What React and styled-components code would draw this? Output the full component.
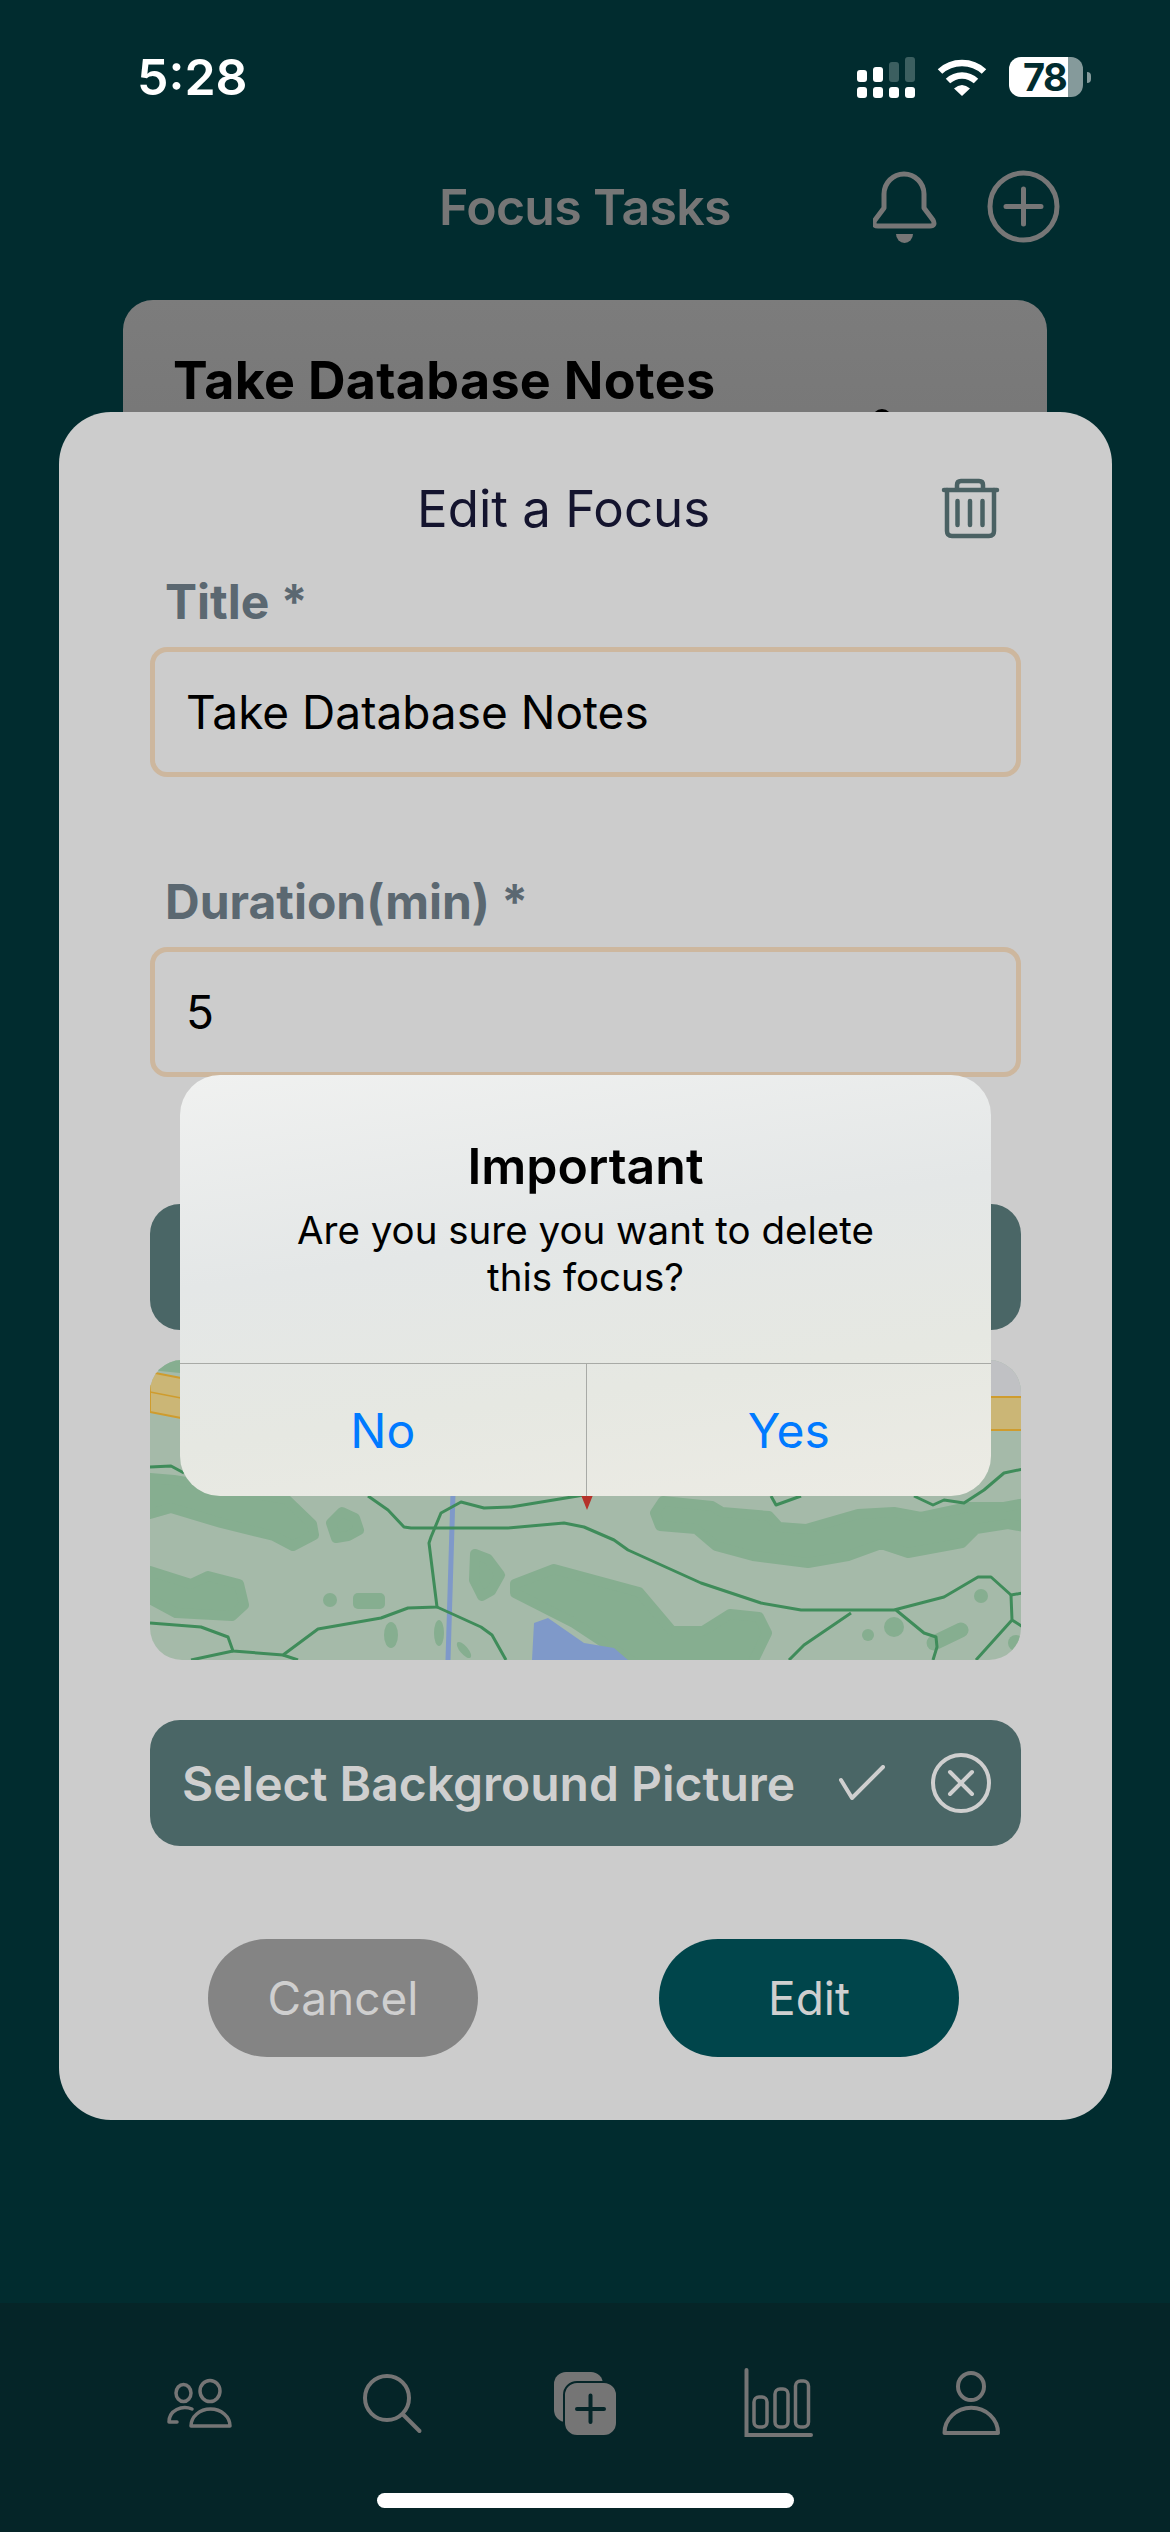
import React from "react";
import styled, { createGlobalStyle } from "styled-components";

const GlobalStyle = createGlobalStyle`
  * { box-sizing: border-box; }
  body {
    margin: 0;
    background: #012c2f;
    font-family: "Inter", "Liberation Sans", sans-serif;
  }
`;

const Page = styled.div`
  position: relative;
  display: flex;
  flex-direction: column;
  width: 1170px;
  height: 2532px;
  overflow: hidden;
  background: #012c2f;
`;

const StatusBar = styled.div`
  display: flex;
  align-items: center;
  justify-content: space-between;
  height: 42px;
  margin-top: 56px;
  padding: 0 79px 0 137px;
`;

const Time = styled.div`
  color: #fff;
  font-size: 50px;
  font-weight: 600;
  line-height: 42px;
`;

const StatusIcons = styled.div`
  display: flex;
  align-items: center;
  gap: 22px;
`;

const Battery = styled.div`
  position: relative;
  display: flex;
  align-items: center;
  justify-content: flex-start;
  width: 74px;
  height: 40px;
  margin-right: 8px;
  padding-left: 14px;
  border-radius: 12px;
  background: linear-gradient(90deg, #fff 80%, #859a9b 80%);
  color: #012c2f;
  font-size: 38px;
  font-weight: 700;
  letter-spacing: -1.5px;

  &::after {
    content: "";
    position: absolute;
    right: -8px;
    top: 15px;
    width: 4px;
    height: 11px;
    border-radius: 0 4px 4px 0;
    background: #859a9b;
  }
`;

const Header = styled.header`
  display: grid;
  grid-template-columns: 1fr auto 1fr;
  align-items: center;
  height: 73px;
  margin-top: 72px;
`;

const HeaderTitle = styled.h1`
  margin: 0;
  color: #767676;
  font-size: 50px;
  font-weight: 600;
  letter-spacing: -0.7px;
`;

const HeaderActions = styled.div`
  grid-column: 3;
  display: flex;
  align-items: center;
  justify-content: flex-end;
  gap: 50px;
  padding-right: 110px;
`;

const TaskCard = styled.div`
  position: relative;
  height: 220px;
  margin: 57px 123px 0;
  padding: 55px 50px;
  border-radius: 30px;
  background: linear-gradient(180deg, #7c7c7c, #747474);
`;

const TaskTitle = styled.div`
  color: #000;
  font-size: 52px;
  font-weight: 700;
  letter-spacing: 0.3px;
  line-height: 52px;
`;

const TaskPip = styled.span`
  position: absolute;
  left: 749px;
  top: 109px;
  width: 20px;
  height: 20px;
  border-radius: 50%;
  background: #000;
`;

const TabBar = styled.nav`
  margin-top: auto;
  height: 229px;
  padding-top: 65px;
  background: #052528;
`;

const TabRow = styled.div`
  display: grid;
  grid-template-columns: repeat(5, 193px);
  justify-content: center;
  justify-items: center;
  align-items: center;
`;

const HomeIndicator = styled.div`
  width: 417px;
  height: 15px;
  margin: 55px auto 0;
  border-radius: 8px;
  background: #fff;
`;

const Sheet = styled.section`
  position: absolute;
  left: 59px;
  top: 412px;
  width: 1053px;
  height: 1708px;
  padding: 66px 91px 0;
  border-radius: 52px;
  background: #cccccc;
`;

const SheetHeader = styled.div`
  display: flex;
  align-items: center;
  justify-content: space-between;
  height: 62px;
  padding: 0 19px 0 267px;
`;

const SheetTitle = styled.h2`
  margin: 0 0 2px;
  color: #14142e;
  font-size: 51px;
  font-weight: 400;
`;

const Field = styled.div`
  height: 300px;
  padding-top: 34px;
`;

const Label = styled.div`
  height: 73px;
  padding-left: 15px;
  color: #5b6871;
  font-size: 48px;
  font-weight: 700;
  line-height: 56px;
`;

const Input = styled.div`
  display: flex;
  align-items: center;
  height: 130px;
  padding: 0 31px;
  border: 5px solid #cdb79e;
  border-radius: 17px;
  color: #000;
  font-size: 46px;
`;

const PickerButton = styled.div`
  display: flex;
  align-items: center;
  height: 126px;
  margin-top: ${(p) => p.$top}px;
  padding: 0 32px;
  border-radius: 30px;
  background: #4a6666;
  color: #cfcfcf;
  font-size: 48px;
  font-weight: 600;

  svg {
    flex: none;
  }
`;

const PickerLabel = styled.span`
  flex: none;
  margin-right: 44px;
  white-space: nowrap;
`;

const ClearIcon = styled.svg`
  margin-left: 46px;
`;

const MapFrame = styled.div`
  height: 300px;
  margin-top: 30px;
  border-radius: 32px;
  overflow: hidden;
  background: #a5baa9;

  svg {
    display: block;
  }
`;

const SheetActions = styled.div`
  display: flex;
  justify-content: space-between;
  margin-top: 93px;
  padding: 0 62px 0 58px;
`;

const ActionButton = styled.div`
  display: flex;
  align-items: center;
  justify-content: center;
  width: ${(p) => p.$width}px;
  height: 118px;
  border-radius: 59px;
  background: ${(p) => p.$bg};
  color: #cfcfcf;
  font-size: 46px;
`;

const Alert = styled.div`
  position: absolute;
  left: 180px;
  top: 1075px;
  width: 811px;
  height: 421px;
  border-radius: 40px;
  overflow: hidden;
  background: linear-gradient(172deg, #f0f1f0 0%, #e4e7e7 40%, #e6e8e2 70%, #ecebe4 100%);
`;

const AlertBody = styled.div`
  display: flex;
  flex-direction: column;
  align-items: center;
  height: 288px;
  padding-top: 60px;
  text-align: center;
`;

const AlertTitle = styled.div`
  color: #000;
  font-size: 50px;
  font-weight: 600;
  line-height: 62px;
`;

const AlertMessage = styled.div`
  margin-top: 10px;
  color: #000;
  font-size: 38.5px;
  line-height: 47px;
`;

const AlertActions = styled.div`
  display: grid;
  grid-template-columns: 1fr 1fr;
  height: 133px;
  border-top: 1px solid #a8aaa6;
`;

const AlertButton = styled.div`
  display: flex;
  align-items: center;
  justify-content: center;
  color: #007aff;
  font-size: 48px;

  & + & {
    border-left: 1px solid #a8aaa6;
  }
`;

const TAB = "#757575";
const TEAL = "#4a6163";

const CellIcon = () => (
  <svg width="58" height="41" viewBox="0 0 58 41">
    <rect x="0" y="30" width="10" height="11" rx="3" fill="#fff" />
    <rect x="16" y="30" width="10" height="11" rx="3" fill="#fff" />
    <rect x="32" y="30" width="10" height="11" rx="3" fill="#fff" />
    <rect x="48" y="30" width="10" height="11" rx="3" fill="#fff" />
    <rect x="0" y="13" width="10" height="12" rx="3" fill="#fff" />
    <rect x="16" y="10" width="10" height="15" rx="3" fill="#fff" />
    <rect x="32" y="5" width="10" height="20" rx="3" fill="#3c5f60" />
    <rect x="48" y="0" width="10" height="25" rx="3" fill="#3c5f60" />
  </svg>
);

const WifiIcon = () => (
  <svg width="50" height="37" viewBox="0 0 50 37" fill="none" stroke="#fff" strokeWidth="6.5">
    <path d="M3 12.5C15 1 35 1 47 12.5" />
    <path d="M11 22C19 14.5 31 14.5 39 22" />
    <path d="M17 29.5Q25 22.5 33 29.5L25 37Z" fill="#fff" stroke="none" />
  </svg>
);

const BellIcon = () => (
  <svg width="64" height="72" viewBox="0 0 64 72" fill="none">
    <path
      d="M11 37V23A20 20 0 0 1 51 23V37L60 49Q63 55 57 55H5Q-1 55 2 49Z"
      stroke="#767676"
      strokeWidth="5"
      strokeLinejoin="round"
    />
    <path d="M23 63H40A8.5 9 0 0 1 23 63Z" fill="#767676" />
  </svg>
);

const PlusCircleIcon = () => (
  <svg width="73" height="73" viewBox="0 0 73 73" fill="none" stroke="#767676" strokeWidth="5" strokeLinecap="round">
    <circle cx="36.5" cy="36.5" r="33.5" />
    <path d="M36.5 19V54M19 36.5H54" />
  </svg>
);

const TrashIcon = () => (
  <svg width="63" height="62" viewBox="20 18 63 62" fill="none" stroke={TEAL} strokeWidth="4.5" strokeLinecap="round" strokeLinejoin="round">
    <path d="M25 30H78" />
    <path d="M38 29V25Q38 21 42 21H60Q64 21 64 25V29" />
    <path d="M28 30V71Q28 76 33 76H70Q75 76 75 71V30" />
    <path d="M38.5 41V65M51 41V65M63.5 41V65" />
  </svg>
);

const CheckIcon = () => (
  <svg width="46" height="36" viewBox="0 0 46 36" fill="none" stroke="#cfcfcf" strokeWidth="4" strokeLinecap="round" strokeLinejoin="round">
    <path d="M2 15L13 33L44 2" />
  </svg>
);

const CloseCircleIcon = () => (
  <ClearIcon width="60" height="60" viewBox="0 0 60 60" fill="none" stroke="#cfcfcf" strokeWidth="4" strokeLinecap="round">
    <circle cx="30" cy="30" r="28" />
    <path d="M19 19L41 41M41 19L19 41" />
  </ClearIcon>
);

const PeopleIcon = () => (
  <svg width="70" height="70" viewBox="0 0 70 70" fill="none" stroke={TAB} strokeWidth="3.5" strokeLinejoin="round" strokeLinecap="round">
    <ellipse cx="46" cy="23" rx="10" ry="10.5" />
    <ellipse cx="19.5" cy="25" rx="7.5" ry="8.5" />
    <path d="M27 58A19.5 17 0 0 1 66 58Z" />
    <path d="M28 41C18 37 5 42 5 54H13" />
  </svg>
);

const SearchIcon = () => (
  <svg width="70" height="70" viewBox="0 0 70 70" fill="none" stroke={TAB} strokeWidth="4" strokeLinecap="round">
    <circle cx="30" cy="30" r="22" />
    <path d="M46.5 47L62.5 63" />
  </svg>
);

const AddCardIcon = () => (
  <svg width="70" height="70" viewBox="0 0 70 70">
    <rect x="4" y="4" width="49" height="50" rx="12" fill={TAB} />
    <rect x="14" y="14" width="53" height="54" rx="13" fill={TAB} stroke="#052528" strokeWidth="2" />
    <path d="M40.5 27.5V54M27 41H54" stroke="#052528" strokeWidth="4" strokeLinecap="round" />
  </svg>
);

const ChartIcon = () => (
  <svg width="70" height="70" viewBox="0 0 70 70" fill="none" stroke={TAB} strokeWidth="3.5" strokeLinecap="round">
    <path d="M3.5 2V67H68" strokeWidth="4" />
    <rect x="11" y="29" width="13" height="30" rx="5" />
    <rect x="32" y="21" width="13" height="38" rx="5" />
    <rect x="52.5" y="13" width="13" height="46" rx="5" />
  </svg>
);

const PersonIcon = () => (
  <svg width="70" height="70" viewBox="0 0 70 70" fill="none" stroke={TAB} strokeWidth="4" strokeLinejoin="round">
    <ellipse cx="35" cy="18.5" rx="13" ry="13.5" />
    <path d="M8.5 65A26.5 25 0 0 1 62 65Z" />
  </svg>
);

const FOREST = "#86ae90";
const ROAD = "#3f8c5a";

const MapPicture = () => (
  <svg width="873" height="300" viewBox="0 0 873 300" fill="none">
    <path d="M0 0H60V16L0 10Z" fill={FOREST} />
    <path d="M560 0H873V37H560Z" fill="#c0c1c4" />
    <path d="M0 12L31 18L300 60L560 37H873V70H560L300 90L31 58L0 52Z" fill="#cbb676" stroke="#cf9c2e" strokeWidth="2" />
    <path d="M0 32L31 38" stroke="#cf9c2e" strokeWidth="1.5" />

    <g fill={FOREST} stroke={FOREST} strokeWidth="10" strokeLinejoin="round">
      <path d="M0 118L24 120L136 139L162 164L164 175L143 186L124 176L71 163L21 148L0 154Z" />
      <path d="M181 163L192 152L205 158L209 170L198 176L186 178Z" />
      <path d="M0 211L41 224L58 216L89 224L94 245L82 256L26 253L0 239Z" />
      <path d="M325 194L338 199L350 215L341 231L332 236L324 220Z" />
      <path d="M365 224L404 209L489 232L522 271L553 271L580 254L609 257L617 273L602 304H486L424 263L365 233Z" />
      <path d="M505 153L513 141L562 146L572 152L619 156L629 167L656 169L708 154L744 152L771 157L818 147L854 147L880 142V168L858 164L826 169L812 183L758 193L731 184L698 196L658 203L603 196L566 186L546 169L510 166Z" />
      <path d="M208 238H230V244H208Z" />
    </g>
    <g fill={FOREST}>
      <circle cx="180" cy="240" r="7" />
      <ellipse cx="241" cy="275" rx="7" ry="13" />
      <ellipse cx="289" cy="273" rx="5" ry="13" />
      <ellipse cx="314" cy="290" rx="4" ry="10" transform="rotate(-40 314 290)" />
      <circle cx="831" cy="236" r="7" />
      <circle cx="744" cy="267" r="10" />
      <circle cx="718" cy="275" r="6" />
      <circle cx="866" cy="283" r="8" />
    </g>
    <path d="M784 283L811 270" stroke={FOREST} strokeWidth="15" strokeLinecap="round" />
    <path d="M384 263L398 258L434 283L464 288L478 300H382Z" fill="#7f99c9" />
    <path d="M304 100L298 300" stroke="#7f99c9" strokeWidth="5" />

    <g stroke={ROAD} strokeWidth="3" strokeLinejoin="round">
      <path d="M0 107L21 106L34 113" />
      <path d="M218 136L238 150L254 167L261 168H358L414 163L434 167L464 180L478 190L551 223L611 243L651 250H744L794 237L828 217H841L861 235L873 233" />
      <path d="M434 135L361 147L334 148L311 142L291 153L281 177L279 183L287 247L258 248L231 258L168 269L133 295L83 291L78 277L51 267L0 263" />
      <path d="M83 291L41 300M133 295L148 300M287 247L331 267L342 275L356 300" />
      <path d="M621 136L626 145L651 136" />
      <path d="M764 136L783 145L794 140L814 143L834 130L854 113L873 109" />
      <path d="M701 253L654 285L639 300" />
      <path d="M746 250L774 273L786 277L787 287L783 300" />
      <path d="M861 235L862 260L826 300M862 260L873 267" />
    </g>
    <path d="M429 130H445L437 150Z" fill="#b5322a" />
  </svg>
);

export default function App() {
  return (
    <Page>
      <GlobalStyle />
      <StatusBar>
        <Time>5:28</Time>
        <StatusIcons>
          <CellIcon />
          <WifiIcon />
          <Battery>78</Battery>
        </StatusIcons>
      </StatusBar>

      <Header>
        <span />
        <HeaderTitle>Focus Tasks</HeaderTitle>
        <HeaderActions>
          <BellIcon />
          <PlusCircleIcon />
        </HeaderActions>
      </Header>

      <TaskCard>
        <TaskTitle>Take Database Notes</TaskTitle>
        <TaskPip />
      </TaskCard>

      <TabBar>
        <TabRow>
          <PeopleIcon />
          <SearchIcon />
          <AddCardIcon />
          <ChartIcon />
          <PersonIcon />
        </TabRow>
        <HomeIndicator />
      </TabBar>

      <Sheet>
        <SheetHeader>
          <SheetTitle>Edit a Focus</SheetTitle>
          <TrashIcon />
        </SheetHeader>
        <Field>
          <Label>Title *</Label>
          <Input>Take Database Notes</Input>
        </Field>
        <Field>
          <Label>Duration(min) *</Label>
          <Input>5</Input>
        </Field>
        <PickerButton $top={64} />
        <MapFrame>
          <MapPicture />
        </MapFrame>
        <PickerButton $top={60}>
          <PickerLabel>Select Background Picture</PickerLabel>
          <CheckIcon />
          <CloseCircleIcon />
        </PickerButton>
        <SheetActions>
          <ActionButton $width={270} $bg="#848484">Cancel</ActionButton>
          <ActionButton $width={300} $bg="#00454b">Edit</ActionButton>
        </SheetActions>
      </Sheet>

      <Alert>
        <AlertBody>
          <AlertTitle>Important</AlertTitle>
          <AlertMessage>
            Are you sure you want to delete
            <br />
            this focus?
          </AlertMessage>
        </AlertBody>
        <AlertActions>
          <AlertButton>No</AlertButton>
          <AlertButton>Yes</AlertButton>
        </AlertActions>
      </Alert>
    </Page>
  );
}
